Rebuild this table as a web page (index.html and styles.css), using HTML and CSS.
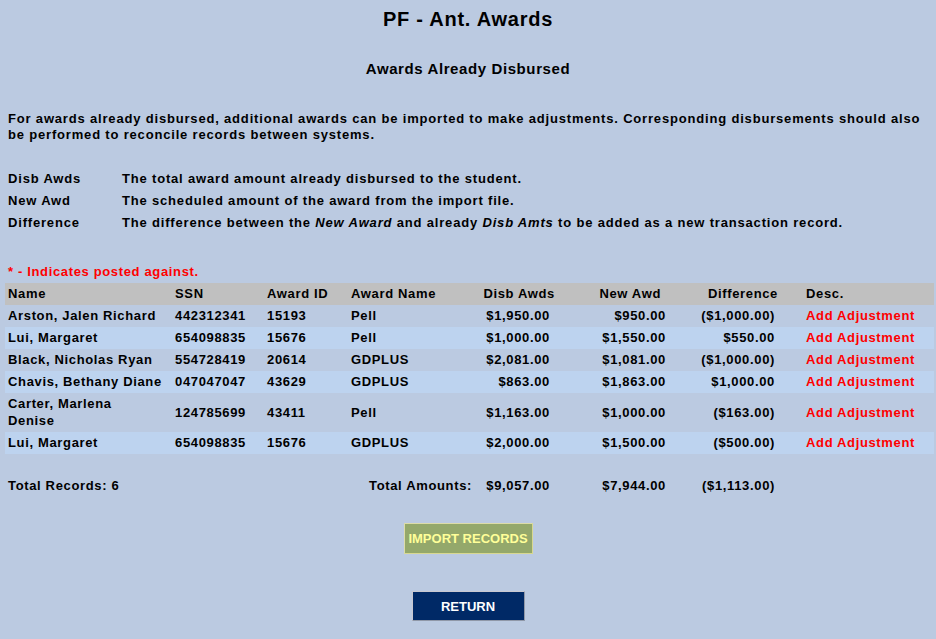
FILE: index.html
```html
<!DOCTYPE html>
<html>
<head>
<meta charset="utf-8">
<title>PF - Ant. Awards</title>
<link rel="stylesheet" href="styles.css">
</head>
<body>
<div class="page">
  <h1 class="title">PF - Ant. Awards</h1>
  <h2 class="subtitle">Awards Already Disbursed</h2>
  <p class="intro">For awards already disbursed, additional awards can be imported to make adjustments. Corresponding disbursements should also be performed to reconcile records between systems.</p>
  <dl class="defs">
    <div class="def"><dt>Disb Awds</dt><dd>The total award amount already disbursed to the student.</dd></div>
    <div class="def"><dt>New Awd</dt><dd>The scheduled amount of the award from the import file.</dd></div>
    <div class="def"><dt>Difference</dt><dd>The difference between the <i>New Award</i> and already <i>Disb Amts</i> to be added as a new transaction record.</dd></div>
  </dl>
  <p class="note">* - Indicates posted against.</p>
  <table class="grid">
    <colgroup>
      <col class="c-name"><col class="c-ssn"><col class="c-id"><col class="c-aname"><col class="c-disb"><col class="c-new"><col class="c-diff"><col class="c-desc">
    </colgroup>
    <thead>
      <tr>
        <th>Name</th><th>SSN</th><th>Award ID</th><th>Award Name</th><th class="h-disb">Disb Awds</th><th class="h-new">New Awd</th><th class="h-diff">Difference</th><th class="h-desc">Desc.</th>
      </tr>
    </thead>
    <tbody>
      <tr><td class="name">Arston, Jalen Richard</td><td>442312341</td><td>15193</td><td>Pell</td><td class="amt disb">$1,950.00</td><td class="amt new">$950.00</td><td class="amt diff">($1,000.00)</td><td class="desc"><a href="#">Add Adjustment</a></td></tr>
      <tr><td class="name">Lui, Margaret</td><td>654098835</td><td>15676</td><td>Pell</td><td class="amt disb">$1,000.00</td><td class="amt new">$1,550.00</td><td class="amt diff">$550.00</td><td class="desc"><a href="#">Add Adjustment</a></td></tr>
      <tr><td class="name">Black, Nicholas Ryan</td><td>554728419</td><td>20614</td><td>GDPLUS</td><td class="amt disb">$2,081.00</td><td class="amt new">$1,081.00</td><td class="amt diff">($1,000.00)</td><td class="desc"><a href="#">Add Adjustment</a></td></tr>
      <tr><td class="name">Chavis, Bethany Diane</td><td>047047047</td><td>43629</td><td>GDPLUS</td><td class="amt disb">$863.00</td><td class="amt new">$1,863.00</td><td class="amt diff">$1,000.00</td><td class="desc"><a href="#">Add Adjustment</a></td></tr>
      <tr><td class="name">Carter, Marlena Denise</td><td>124785699</td><td>43411</td><td>Pell</td><td class="amt disb">$1,163.00</td><td class="amt new">$1,000.00</td><td class="amt diff">($163.00)</td><td class="desc"><a href="#">Add Adjustment</a></td></tr>
      <tr><td class="name">Lui, Margaret</td><td>654098835</td><td>15676</td><td>GDPLUS</td><td class="amt disb">$2,000.00</td><td class="amt new">$1,500.00</td><td class="amt diff">($500.00)</td><td class="desc"><a href="#">Add Adjustment</a></td></tr>
    </tbody>
    <tfoot>
      <tr class="spacer"><td colspan="8"></td></tr>
      <tr class="totals">
        <td colspan="2">Total Records: 6</td><td colspan="2" class="tot-label">Total Amounts:</td><td class="amt disb">$9,057.00</td><td class="amt new">$7,944.00</td><td class="amt diff">($1,113.00)</td><td></td>
      </tr>
    </tfoot>
  </table>
  <div class="actions">
    <button class="btn btn-import" type="button">IMPORT RECORDS</button>
    <button class="btn btn-return" type="button">RETURN</button>
  </div>
</div>
</body>
</html>
```

FILE: styles.css
```css
html, body {
  margin: 0;
  padding: 0;
  background: #bbcae1;
}
body {
  font-family: "Liberation Sans", Arial, sans-serif;
  font-weight: bold;
  font-size: 13px;
  letter-spacing: 0.82px;
  color: #000;
}
.page {
  padding: 0 5px 0 5px;
}
.title {
  margin: 0;
  padding-top: 7px;
  font-size: 20px;
  line-height: 24px;
  letter-spacing: 0.75px;
  text-align: center;
}
.subtitle {
  margin: 0;
  padding-top: 29px;
  font-size: 15px;
  line-height: 18px;
  letter-spacing: 0.6px;
  text-align: center;
}
.intro {
  margin: 0;
  padding: 33px 0 0 3px;
  line-height: 16px;
}
.defs {
  margin: 0;
  padding: 28px 0 0 3px;
}
.def {
  display: flex;
  line-height: 16px;
  margin-bottom: 6px;
}
.def dt {
  width: 114px;
  flex: none;
}
.def dd {
  margin: 0;
}
.def i {
  font-style: italic;
}
.note {
  margin: 0;
  padding: 27px 0 0 3px;
  line-height: 16px;
  letter-spacing: 0.65px;
  color: #ff0000;
}
.grid {
  width: 929px;
  border-collapse: collapse;
  table-layout: fixed;
  margin-top: 3px;
  letter-spacing: 0.65px;
}
.c-name { width: 167px; }
.c-ssn { width: 92px; }
.c-id { width: 84px; }
.c-aname { width: 132px; }
.c-disb { width: 76px; }
.c-new { width: 114px; }
.c-diff { width: 110px; }
.c-desc { width: auto; }
.grid th, .grid td {
  padding: 2px 3px 3px 3px;
  line-height: 17px;
  text-align: left;
  vertical-align: middle;
  font-weight: bold;
}
.grid td.name {
  padding-right: 10px;
}
.grid thead tr {
  background: #c0c0c0;
}
.grid tbody tr:nth-child(even) {
  background: #bdd3ef;
}
.grid th.h-disb { text-align: right; padding-right: 1px; white-space: nowrap; }
.grid th.h-new { text-align: right; padding-right: 9px; }
.grid th.h-diff { text-align: right; padding-right: 2px; }
.grid th.h-desc, .grid td.desc { padding-left: 26px; white-space: nowrap; }
.grid td.amt { text-align: right; white-space: nowrap; }
.grid td.disb { padding-right: 6px; }
.grid td.new { padding-right: 4px; }
.grid td.diff { padding-right: 5px; }
.grid td.desc a {
  color: #ff0000;
  text-decoration: none;
}
.grid .spacer td {
  height: 20px;
  padding: 0;
}
.grid .totals td {
  padding-top: 3px;
  white-space: nowrap;
}
.grid .totals td.tot-label {
  text-align: right;
  padding-right: 8px;
}
.actions {
  display: flex;
  flex-direction: column;
  align-items: center;
  padding-top: 26px;
}
.btn {
  font-family: "Liberation Sans", Arial, sans-serif;
  font-weight: bold;
  font-size: 13px;
  letter-spacing: 0;
  white-space: nowrap;
  padding: 0;
  cursor: pointer;
}
.btn-import {
  width: 129px;
  height: 31px;
  background: #94a86b;
  color: #ffff99;
  border: 1px solid #dcdca8;
  border-right-color: #d8d890;
  border-bottom-color: #d8d890;
}
.btn-return {
  width: 113px;
  height: 30px;
  margin-top: 37px;
  background: #002966;
  color: #ffffff;
  border: 1px solid #c8c8d0;
  border-right-color: #9098a8;
  border-bottom-color: #9098a8;
}
```
